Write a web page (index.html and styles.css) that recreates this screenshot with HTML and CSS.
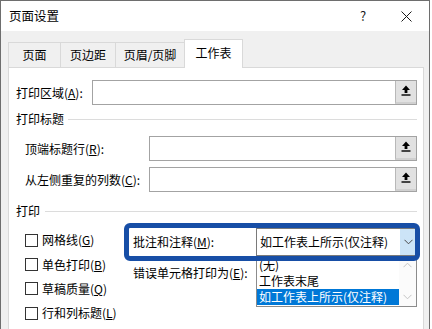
FILE: index.html
```html
<!DOCTYPE html>
<html lang="zh-CN">
<head>
<meta charset="utf-8">
<title>页面设置</title>
<link rel="stylesheet" href="styles.css">
</head>
<body>
<div class="dialog">
  <div class="titlebar">
    <span class="title">页面设置</span>
    <span class="tb-btn help">?</span>
    <span class="tb-btn close"><svg width="11" height="11" viewBox="0 0 11 11"><path d="M0.5 0.5 L10.5 10.5 M10.5 0.5 L0.5 10.5" stroke="#1a1a1a" stroke-width="1" fill="none"/></svg></span>
  </div>
  <div class="body">
    <div class="tabs">
      <div class="tab t1">页面</div>
      <div class="tab t2">页边距</div>
      <div class="tab t3">页眉/页脚</div>
      <div class="tab active">工作表</div>
    </div>
    <div class="panel">
      <div class="row r-area">
        <span class="lbl l-area">打印区域(<u>A</u>):</span>
        <div class="refbox"><span class="refbtn"><svg width="10" height="11" viewBox="0 0 10 11"><path d="M5 0.5 L9 5 H6.4 V8 H3.6 V5 H1 Z" fill="#000"/><rect x="0.5" y="9.3" width="9" height="1.4" fill="#000"/></svg></span></div>
      </div>
      <div class="group g-titles"><span>打印标题</span><i class="rule"></i></div>
      <div class="row r-sub r-top">
        <span class="lbl l-sub">顶端标题行(<u>R</u>):</span>
        <div class="refbox"><span class="refbtn"><svg width="10" height="11" viewBox="0 0 10 11"><path d="M5 0.5 L9 5 H6.4 V8 H3.6 V5 H1 Z" fill="#000"/><rect x="0.5" y="9.3" width="9" height="1.4" fill="#000"/></svg></span></div>
      </div>
      <div class="row r-sub r-left">
        <span class="lbl l-sub">从左侧重复的列数(<u>C</u>):</span>
        <div class="refbox"><span class="refbtn"><svg width="10" height="11" viewBox="0 0 10 11"><path d="M5 0.5 L9 5 H6.4 V8 H3.6 V5 H1 Z" fill="#000"/><rect x="0.5" y="9.3" width="9" height="1.4" fill="#000"/></svg></span></div>
      </div>
      <div class="group g-print"><span>打印</span><i class="rule"></i></div>
      <div class="print">
        <div class="checks">
          <div class="check"><span class="box"></span><span>网格线(<u>G</u>)</span></div>
          <div class="check"><span class="box"></span><span>单色打印(<u>B</u>)</span></div>
          <div class="check"><span class="box"></span><span>草稿质量(<u>Q</u>)</span></div>
          <div class="check"><span class="box"></span><span>行和列标题(<u>L</u>)</span></div>
        </div>
        <div class="opts">
          <div class="opt-row hl">
            <span class="opt-lbl">批注和注释(<u>M</u>):</span>
            <div class="select">
              <span class="sel-text">如工作表上所示(仅注释)</span>
              <span class="sel-btn"><svg width="9" height="6" viewBox="0 0 9 6"><path d="M0.5 0.8 L4.5 4.8 L8.5 0.8" stroke="#4a4a4a" stroke-width="1" fill="none"/></svg></span>
              <div class="list">
                <div class="item">(无)</div>
                <div class="item">工作表末尾</div>
                <div class="item sel">如工作表上所示(仅注释)</div>
                <div class="scroll">
                  <svg width="9" height="6" viewBox="0 0 9 6"><path d="M0.5 5.2 L4.5 1.2 L8.5 5.2" stroke="#c4c4c4" stroke-width="1" fill="none"/></svg>
                  <svg width="9" height="6" viewBox="0 0 9 6"><path d="M0.5 0.8 L4.5 4.8 L8.5 0.8" stroke="#c4c4c4" stroke-width="1" fill="none"/></svg>
                </div>
              </div>
            </div>
          </div>
          <div class="opt-row">
            <span class="opt-lbl">错误单元格打印为(<u>E</u>):</span>
          </div>
        </div>
      </div>
    </div>
  </div>
</div>
</body>
</html>
```
FILE: styles.css
```css
* { box-sizing: border-box; margin: 0; padding: 0; }
html, body { width: 432px; height: 329px; overflow: hidden; background: #ffffff; }
body {
  font-family: "Noto Sans CJK SC", "Microsoft YaHei", sans-serif;
  font-size: 12px;
  line-height: 16px;
  color: #000;
}
u { text-underline-offset: 1px; }

.dialog {
  width: 430px;
  height: 340px;
  border: 1px solid #6e6e6e;
  border-bottom: none;
  background: #f0f0f0;
  display: flex;
  flex-direction: column;
}
.titlebar {
  height: 30px;
  flex: none;
  background: #fff;
  display: flex;
  align-items: center;
  padding-left: 8px;
  padding-right: 13px;
}
.title { flex: 1; font-size: 12.5px; }
.tb-btn { width: 20px; height: 20px; display: flex; align-items: center; justify-content: center; }
.help { font-size: 13px; margin-right: 23px; color: #1a1a1a; }

.body { flex: 1; padding-top: 8px; display: flex; flex-direction: column; }
.tabs {
  height: 28px;
  margin-left: 7px;
  display: flex;
  align-items: flex-end;
}
.tab {
  height: 25px;
  display: flex;
  align-items: center;
  justify-content: center;
  border: 1px solid #d9d9d9;
  border-bottom: none;
  border-right: none;
  background: #f0f0f0;
}
.t1 { width: 52px; }
.t2 { width: 55px; }
.t3 { width: 69px; }
.tab.active {
  width: 59px;
  height: 29px;
  margin-bottom: -1px;
  border-right: 1px solid #d9d9d9;
  background: #fff;
  position: relative;
  z-index: 1;
  padding-bottom: 3px;
}
.panel {
  margin-left: 7px;
  width: 416px;
  flex: 1;
  background: #fff;
  border: 1px solid #d9d9d9;
  padding: 0 6px 0 7px;
}

.row { display: flex; align-items: center; height: 25px; }
.r-area { margin-top: 12px; }
.l-area { width: 76px; }
.r-sub { padding-left: 9px; }
.r-top { margin-top: 8px; }
.r-left { margin-top: 6px; }
.l-sub { width: 124px; }
.refbox {
  flex: 1;
  height: 25px;
  border: 1px solid #a3a3a3;
  background: #fff;
  display: flex;
  justify-content: flex-end;
}
.refbtn {
  width: 21px;
  height: 23px;
  background: #e1e1e1;
  border-left: 1px solid #b8b8b8;
  border-bottom: 2px solid #d0d0d0;
  display: flex;
  justify-content: center;
  padding-top: 4px;
}

.group { display: flex; align-items: center; height: 18px; }
.g-titles { margin-top: 5px; gap: 4px; }
.g-print { margin-top: 10px; gap: 5px; }
.rule { flex: 1; height: 1px; background: #dcdcdc; }

.print { display: flex; }
.checks { width: 108px; flex: none; padding-left: 9px; padding-top: 8px; }
.check { height: 24.4px; display: flex; align-items: center; gap: 4px; white-space: nowrap; }
.box { width: 13px; height: 13px; border: 1px solid #333; background: #fff; flex: none; }

.opts { width: 296px; flex: none; margin-top: 3px; }
.opt-row { display: flex; align-items: center; padding-left: 9px; height: 18px; margin-top: 3px; white-space: nowrap; }
.opt-row.hl {
  height: 38px;
  margin-top: 0;
  padding: 5px 0 5px 9px;
  position: relative;
}
.opt-row.hl::after {
  content: "";
  position: absolute;
  inset: 0;
  border: 5px solid #174ea6;
  border-radius: 6px;
  z-index: 3;
  pointer-events: none;
}
.opt-lbl { width: 123px; flex: none; }
.select {
  width: 161px;
  height: 28px;
  flex: none;
  border: 1px solid #7a7a7a;
  background: #fff;
  display: flex;
  align-items: center;
  position: relative;
}
.sel-text { flex: 1; padding-left: 3px; }
.sel-btn {
  width: 16px;
  height: 26px;
  background: #cce4f7;
  display: flex;
  align-items: center;
  justify-content: center;
}
.list {
  position: absolute;
  top: 27px;
  left: -1px;
  width: 161px;
  height: 51px;
  border: 1px solid #8c8c8c;
  background: #fff;
  z-index: 2;
  padding-right: 17px;
}
.item { height: 16px; line-height: 16px; padding-left: 2px; }
.item.sel { background: #0078d7; color: #fff; }
.scroll {
  position: absolute;
  top: 0;
  right: 0;
  bottom: 0;
  width: 17px;
  background: #fbfbfb;
  display: flex;
  flex-direction: column;
  justify-content: space-between;
  align-items: center;
  padding: 5px 0 6px;
}
```
